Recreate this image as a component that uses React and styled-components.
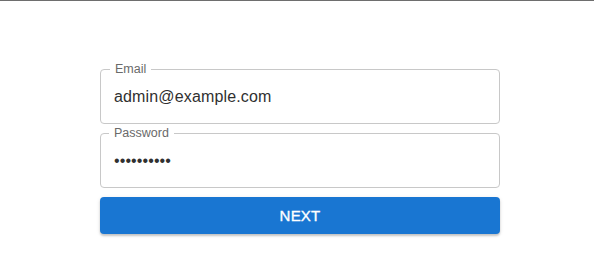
import React from 'react';
import styled, {createGlobalStyle} from 'styled-components';

const GlobalStyle = createGlobalStyle`
    html, body {
        margin: 0;
        padding: 0;
        background: #fff;
        font-family: "Liberation Sans", Arial, sans-serif;
    }
`;

const TopRule = styled.div`
    height: 1px;
    background: #6e6e6e;
`;

const Page = styled.div`
    width: 594px;
    height: 270px;
    background: #fff;
`;

const Form = styled.form`
    width: 400px;
    margin: 68px 0 0 100px;
    display: flex;
    flex-direction: column;
    gap: 9px;
`;

const Field = styled.div`
    position: relative;
    height: 55px;
    box-sizing: border-box;
    border: 1px solid #c8c8c8;
    border-radius: 4px;
    display: flex;
    align-items: center;
    padding: 0 13px;
`;

const Label = styled.label`
    position: absolute;
    top: -9px;
    left: ${p => p.$left || 9}px;
    padding: 0 5px;
    background: #fff;
    color: #6a6a6a;
    font-size: 12.5px;
    line-height: 16px;
`;

const Input = styled.input`
    width: 100%;
    border: none;
    outline: none;
    background: transparent;
    padding: 0;
    font-family: "Liberation Sans", Arial, sans-serif;
    font-size: 16px;
    color: #303030;
    letter-spacing: ${p => p.type === 'password' ? '0.1px' : '0.15px'};
`;

const NextButton = styled.button`
    height: 37px;
    border: none;
    border-radius: 4px;
    background: #1976d2;
    color: #fff;
    font-family: "Liberation Sans", Arial, sans-serif;
    font-size: 15px;
    letter-spacing: 0.2px;
    -webkit-text-stroke: 0.35px #fff;
    text-transform: uppercase;
    box-shadow: 0 2px 2px rgba(0, 0, 0, 0.18), 0 1px 4px rgba(0, 0, 0, 0.1);
    cursor: pointer;
`;

const App = () => {
  return (
    <Page>
      <GlobalStyle/>
      <TopRule/>
      <Form onSubmit={e => e.preventDefault()}>
        <Field>
          <Label htmlFor="email">Email</Label>
          <Input id="email" type="text" value="admin@example.com" readOnly/>
        </Field>
        <Field>
          <Label htmlFor="password" $left={8}>Password</Label>
          <Input id="password" type="password" value="1234567890" readOnly/>
        </Field>
        <NextButton type="submit">Next</NextButton>
      </Form>
    </Page>
  );
};

export default App;
